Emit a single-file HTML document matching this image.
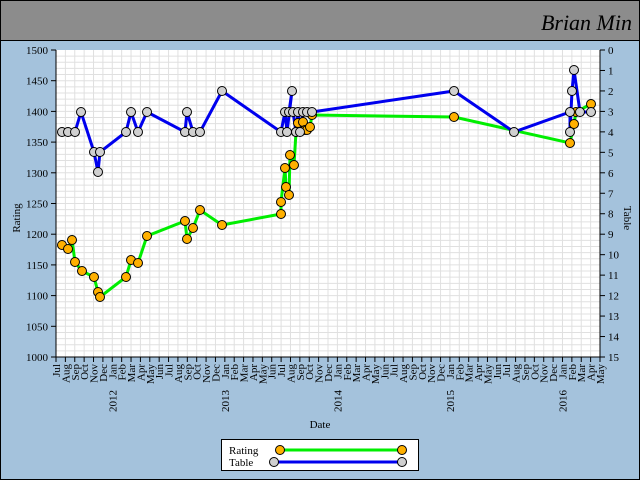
<!DOCTYPE html>
<html><head><meta charset="utf-8"><style>
html,body{margin:0;padding:0;width:640px;height:480px;overflow:hidden;background:#a4c2dc;}
svg{display:block;font-family:"Liberation Serif",serif;}
</style></head><body>
<svg id="s" width="640" height="480" viewBox="0 0 640 480" xmlns="http://www.w3.org/2000/svg">
<rect x="0.5" y="0.5" width="639" height="479" fill="#a4c2dc" stroke="#000"/>
<rect x="0.5" y="0.5" width="639" height="40" fill="#8c8c8c" stroke="#000"/>
<text x="632" y="30" text-anchor="end" font-family="Liberation Serif" font-style="italic" font-size="22" fill="#000">Brian  Min</text>
<rect x="56" y="50" width="544" height="307" fill="#fff"/>
<g id="grid" stroke="#e0e0e0" stroke-width="1"></g>
<g id="ax" font-size="11" fill="#000"></g>
<line x1="56" y1="50" x2="56" y2="357" stroke="#000"/>
<line x1="56" y1="357" x2="600" y2="357" stroke="#000"/>
<line x1="600" y1="50" x2="600" y2="357" stroke="#000"/>
<polyline id="gl" fill="none" stroke="#00ee00" stroke-width="3"/>
<polyline id="bl" fill="none" stroke="#0000ee" stroke-width="3"/>
<g id="pts" stroke="#000" stroke-width="1"></g>
<text x="320" y="428" text-anchor="middle" font-size="11">Date</text>
<text transform="translate(20,218) rotate(-90)" text-anchor="middle" font-size="11">Rating</text>
<text transform="translate(624,218) rotate(90)" text-anchor="middle" font-size="11">Table</text>
<rect x="221.5" y="439.5" width="197" height="31" fill="#fff" stroke="#000"/>
<text x="229" y="454" font-size="11">Rating</text>
<text x="229" y="466" font-size="11">Table</text>
<line x1="280" y1="450" x2="402" y2="450" stroke="#00ee00" stroke-width="3"/>
<line x1="274" y1="462" x2="402" y2="462" stroke="#0000ee" stroke-width="3"/>
<circle cx="280" cy="450" r="4.5" fill="#ffb000" stroke="#000"/>
<circle cx="402" cy="450" r="4.5" fill="#ffb000" stroke="#000"/>
<circle cx="274" cy="462" r="4.5" fill="#d0d0d0" stroke="#000"/>
<circle cx="402" cy="462" r="4.5" fill="#d0d0d0" stroke="#000"/>
</svg>
<script>
var NS="http://www.w3.org/2000/svg";
function el(p,t,a,txt){var e=document.createElementNS(NS,t);for(var k in a)e.setAttribute(k,a[k]);if(txt)e.textContent=txt;p.appendChild(e);return e;}
var g=document.getElementById('grid'),ax=document.getElementById('ax');
var x0=56,x1=600,N=58,dx=(x1-x0)/N;
for(var r=1000;r<=1500;r+=10){var y=357-(r-1000)*307/500;if(r>1000&&r<1500)el(g,'line',{x1:56,x2:600,y1:y,y2:y});
 if(r%50==0){el(ax,'line',{x1:51,x2:56,y1:y,y2:y,stroke:'#000'});el(ax,'text',{x:48,y:y+4,'text-anchor':'end'},String(r));}}
for(var t=0;t<=15;t++){var y=50+t*307/15;el(ax,'line',{x1:600,x2:605,y1:y,y2:y,stroke:'#000'});el(ax,'text',{x:608,y:y+4},String(t));}
var M=['Jan','Feb','Mar','Apr','May','Jun','Jul','Aug','Sep','Oct','Nov','Dec'];
for(var i=0;i<=N;i++){var x=x0+i*dx;if(i>0&&i<N)el(g,'line',{x1:x,x2:x,y1:50,y2:357});
 el(ax,'line',{x1:x,x2:x,y1:357,y2:362,stroke:'#000'});
 var m=(6+i)%12,yr=2011+Math.floor((6+i)/12);
 el(ax,'text',{transform:'translate('+(x+4)+',364) rotate(-90)','text-anchor':'end'},M[m]);
 if(m==0)el(ax,'text',{transform:'translate('+(x+4)+',390) rotate(-90)','text-anchor':'end'},String(yr));}
var R=[[62,245],[68,249],[72,240],[75,262],[82,271],[94,277],[98,292],[100,297],[126,277],[131,260],[138,263],[147,236],[185,221],[187,239],[193,228],[200,210],[222,225],[281,214],[281,202],[285,168],[286,187],[289,195],[290,155],[294,165],[296,132],[298,123],[303,122],[305,130],[307,130],[310,127],[312,115],[454,117],[570,143],[574,124],[576,112],[591,104]];
var T=[[62,132],[68,132],[75,132],[81,112],[94,152],[98,172],[100,152],[126,132],[131,112],[138,132],[147,112],[185,132],[187,112],[193,132],[200,132],[222,91],[281,132],[285,112],[287,132],[292,91],[289,112],[293,112],[296,132],[298,112],[300,132],[303,112],[307,112],[312,112],[454,91],[514,132],[570,112],[570,132],[572,91],[574,70],[580,112],[591,112]];
document.getElementById('gl').setAttribute('points',R.map(function(p){return p.join(',')}).join(' '));
document.getElementById('bl').setAttribute('points',T.map(function(p){return p.join(',')}).join(' '));
var P=document.getElementById('pts');
R.forEach(function(p){el(P,'circle',{cx:p[0],cy:p[1],r:4.5,fill:'#ffb000'});});
T.forEach(function(p){el(P,'circle',{cx:p[0],cy:p[1],r:4.5,fill:'#d0d0d0'});});
</script>
</body></html>
